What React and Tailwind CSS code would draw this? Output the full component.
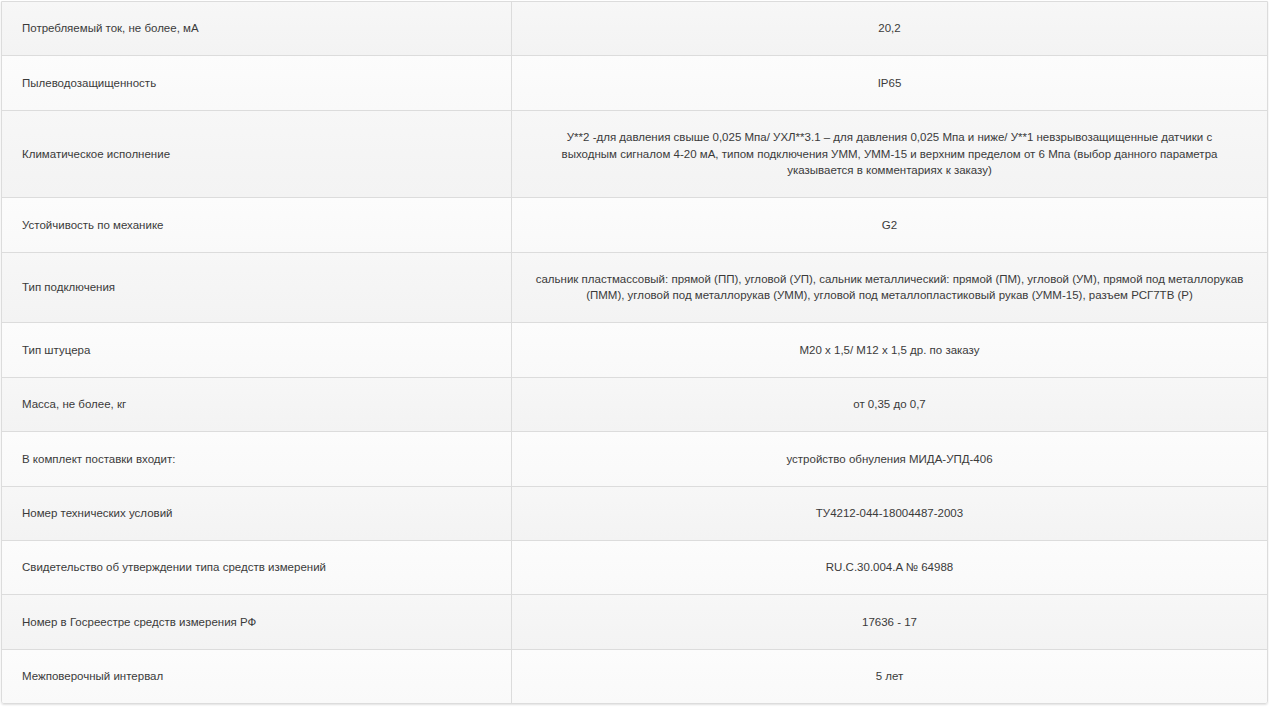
export default function App() {
  const rows = [
    ["Потребляемый ток, не более, мА", ["20,2"]],
    ["Пылеводозащищенность", ["IP65"]],
    ["Климатическое исполнение", [
      "У**2 -для давления свыше 0,025 Мпа/ УХЛ**3.1 – для давления 0,025 Мпа и ниже/ У**1 невзрывозащищенные датчики с",
      "выходным сигналом 4-20 мА, типом подключения УММ, УММ-15 и верхним пределом от 6 Мпа (выбор данного параметра",
      "указывается в комментариях к заказу)",
    ]],
    ["Устойчивость по механике", ["G2"]],
    ["Тип подключения", [
      "сальник пластмассовый: прямой (ПП), угловой (УП), сальник металлический: прямой (ПМ), угловой (УМ), прямой под металлорукав",
      "(ПММ), угловой под металлорукав (УММ), угловой под металлопластиковый рукав (УММ-15), разъем РСГ7ТВ (Р)",
    ]],
    ["Тип штуцера", ["М20 х 1,5/ М12 х 1,5 др. по заказу"]],
    ["Масса, не более, кг", ["от 0,35 до 0,7"]],
    ["В комплект поставки входит:", ["устройство обнуления МИДА-УПД-406"]],
    ["Номер технических условий", ["ТУ4212-044-18004487-2003"]],
    ["Свидетельство об утверждении типа средств измерений", ["RU.C.30.004.A № 64988"]],
    ["Номер в Госреестре средств измерения РФ", ["17636 - 17"]],
    ["Межповерочный интервал", ["5 лет"]],
  ];
  return (
    <div className="w-[1269px] h-[707px] bg-white pt-px pl-px" style={{ fontFamily: '"Liberation Sans", Arial, sans-serif' }}>
      <div className="w-[1267px] border border-[#dcdcdc] rounded-b-[3px] shadow-[0_1px_2px_rgba(0,0,0,0.12)] overflow-hidden">
        {rows.map(([k, v], i) => (
          <div
            key={i}
            className={`flex text-[11.5px] leading-[16.5px] text-[#3a3a3a] ${i < rows.length - 1 ? "border-b border-[#dcdcdc]" : ""} ${i % 2 === 0 ? "bg-gradient-to-b from-[#f7f7f7] to-[#f3f3f3]" : "bg-gradient-to-b from-[#fcfcfc] to-[#f9f9f9]"}`}
          >
            <div className="w-[510px] shrink-0 border-r border-[#dcdcdc] pl-5 pr-4 py-[18.45px] flex items-center">
              {k}
            </div>
            <div className="flex-1 px-2 py-[18.45px] text-center flex flex-col items-center justify-center">
              {v.map((line, j) => (
                <div key={j} className="whitespace-nowrap">{line}</div>
              ))}
            </div>
          </div>
        ))}
      </div>
    </div>
  );
}
